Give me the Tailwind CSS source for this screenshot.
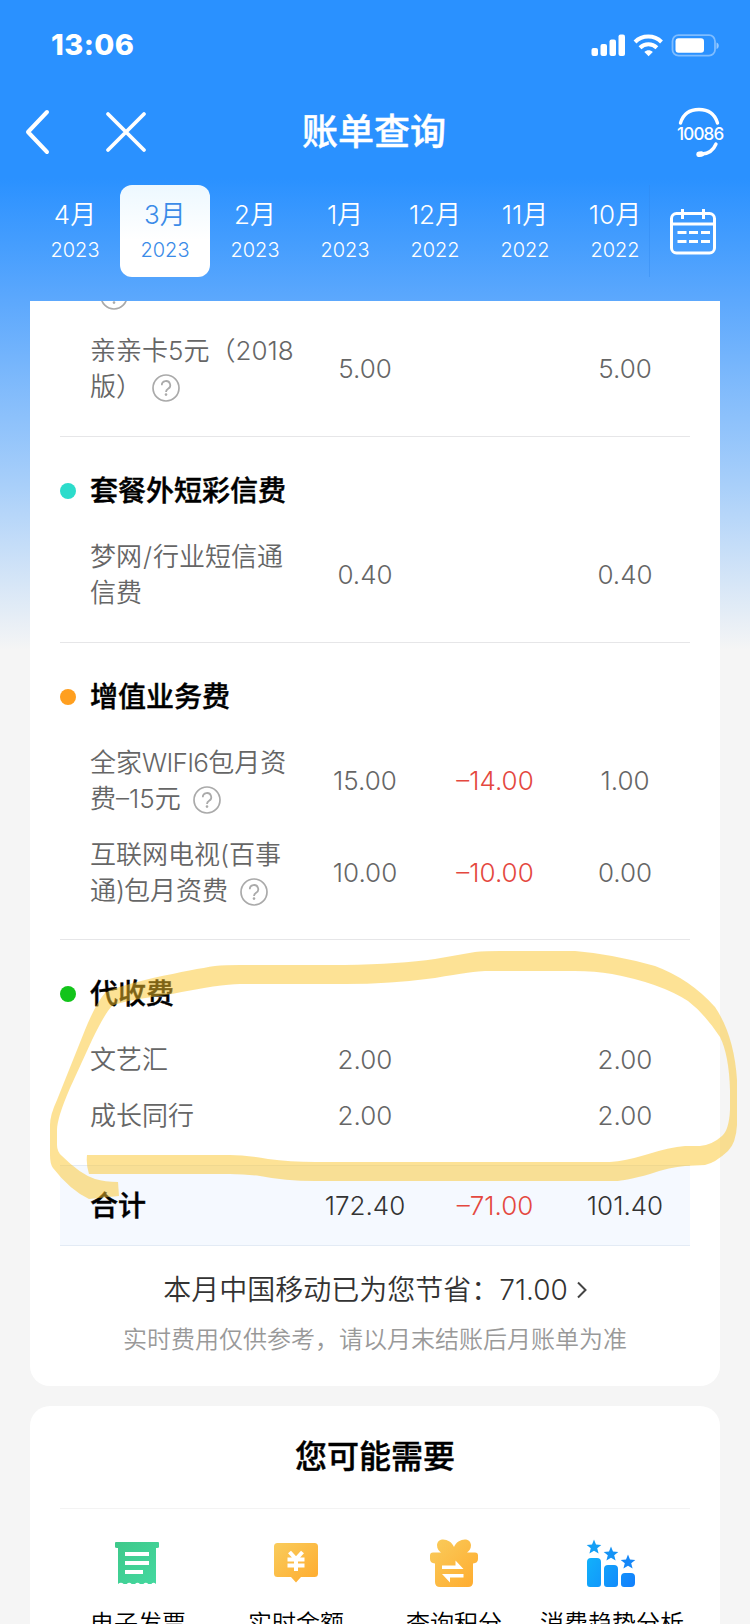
<!DOCTYPE html>
<html lang="zh-CN">
<head>
<meta charset="utf-8">
<title>账单查询</title>
<script src="https://cdn.jsdelivr.net/npm/@tailwindcss/browser@4"></script>
</head>
<body class="bg-[#f5f5f5]">
<svg class="hidden">
  <symbol id="help" viewBox="0 0 28 28"><circle cx="14" cy="14" r="13" fill="none" stroke="#aaa" stroke-width="1.7"/><path d="M9.800 11.200a4.200 4.100 0 1 1 6.300 3.500c-1.400.9-2.100 1.400-2.100 3.300" fill="none" stroke="#aaa" stroke-width="1.800"/><circle cx="14" cy="20.600" r="1.300" fill="#aaa"/></symbol>
</svg>
<div class="relative w-[750px] h-[1624px] overflow-hidden bg-[linear-gradient(180deg,#2a91ff_0px,#2a91ff_178px,#5ca8fd_300px,#a6cefa_480px,#f5f5f5_650px)] font-['Inter','Noto_Sans_CJK_SC',sans-serif] font-[350]">

  <!-- status bar -->
  <div class="h-[88px] flex items-center justify-between pl-[51px] pr-[31px] text-white">
    <div class="text-[29px] leading-10 font-extrabold tracking-[0.4px] pt-[2px]">13:06</div>
    <svg class="w-[128px] h-[24px] mt-[2px]" viewBox="0 0 128 24" fill="#fff">
      <rect x="0.500" y="15" width="6.500" height="8" rx="2"/><rect x="9.500" y="11" width="6.500" height="12" rx="2"/><rect x="18.500" y="6.500" width="6.500" height="16.500" rx="2"/><rect x="27.500" y="1.500" width="6.500" height="21.500" rx="2"/>
      <g fill="none" stroke="#fff" stroke-width="4"><path d="M44 9c7.200-7.200 19.300-7.200 26.500 0"/><path d="M49 14.800c4.800-4.700 12-4.700 16.900 0"/></g>
      <path d="M57.600 23.200l-4.200-4.300c2.300-2.200 6.100-2.200 8.400 0z"/>
      <rect x="81.500" y="2.200" width="42.500" height="20.500" rx="6" fill="none" stroke="#fff" stroke-opacity=".4" stroke-width="1.800"/>
      <rect x="84.500" y="5.200" width="28.500" height="14.500" rx="3"/><path d="M125.500 9.500c3 1 3 5.500 0 6.500z" fill-opacity=".5"/>
    </svg>
  </div>

  <!-- navigation -->
  <div class="h-[88px] flex items-center text-white pl-6">
    <svg class="w-[28px] h-[48px]" viewBox="0 0 28 48" fill="none" stroke="#fff" stroke-width="4" stroke-linecap="round" stroke-linejoin="round"><path d="M23 4L4 24l19 20"/></svg>
    <svg class="w-[44px] h-[44px] ml-[52px]" viewBox="0 0 44 44" fill="none" stroke="#fff" stroke-width="3.800" stroke-linecap="round"><path d="M4 4l36 36M40 4L4 40"/></svg>
    <h1 class="ml-[154px] text-[36px] leading-[52px] font-medium [-webkit-text-stroke:0.400px_white]">账单查询</h1>
    <div class="relative ml-[231px] w-[46px] h-[50px]">
      <svg class="absolute inset-0 w-[46px] h-[50px]" viewBox="0 0 46 50" fill="none" stroke="#fff" stroke-width="3.400" stroke-linecap="round"><path d="M3.500 16C6.500 6 13.500 2.500 22 2.500S37.500 6 40.500 16M39 37c-2.500 6-7 9.500-14 10"/><path d="M22 47.300l2.500-.200" stroke-width="5.500"/></svg>
      <div class="absolute top-[17px] left-0 text-[17px] leading-5 font-medium tracking-[-0.800px]">10086</div>
    </div>
  </div>

  <!-- month selector -->
  <div class="h-[125px] pt-[9px] pl-[30px] flex text-white text-center">
    <div class="w-[620px] h-[92px] flex border-r border-[#2f87ee]/40 overflow-hidden">
      <div class="w-[90px] shrink-0 pt-[12px]"><div class="text-[26px] leading-[35px]">4月</div><div class="text-[20px] leading-[36px]">2023</div></div>
      <div class="w-[90px] shrink-0 pt-[12px] rounded-xl bg-linear-to-b from-[#edf8ff] to-white to-60% text-[#3a8be8]"><div class="text-[26px] leading-[35px]">3月</div><div class="text-[20px] leading-[36px]">2023</div></div>
      <div class="w-[90px] shrink-0 pt-[12px]"><div class="text-[26px] leading-[35px]">2月</div><div class="text-[20px] leading-[36px]">2023</div></div>
      <div class="w-[90px] shrink-0 pt-[12px]"><div class="text-[26px] leading-[35px]">1月</div><div class="text-[20px] leading-[36px]">2023</div></div>
      <div class="w-[90px] shrink-0 pt-[12px]"><div class="text-[26px] leading-[35px]">12月</div><div class="text-[20px] leading-[36px]">2022</div></div>
      <div class="w-[90px] shrink-0 pt-[12px]"><div class="text-[26px] leading-[35px]">11月</div><div class="text-[20px] leading-[36px]">2022</div></div>
      <div class="w-[90px] shrink-0 pt-[12px]"><div class="text-[26px] leading-[35px]">10月</div><div class="text-[20px] leading-[36px]">2022</div></div>
    </div>
    <svg class="w-[48px] h-[48px] ml-[19px] mt-[23px]" viewBox="0 0 48 48" fill="none" stroke="#fff" stroke-width="3"><rect x="2.500" y="5.500" width="43" height="39.500" rx="5"/><path d="M2.500 16H45.500M13.500 1v10M34.500 1v10M8.500 24.500h9M20 24.500h9M32 24.500h9M8.500 33.500h9M20 33.500h9M32 33.500h9"/></svg>
  </div>

  <!-- bill card -->
  <div class="mx-[30px] h-[1085px] px-[30px] bg-white rounded-b-[20px] overflow-hidden text-[26px] leading-9 text-[#666]">
    <div class="h-[9px] flex items-end pl-10"><svg class="w-[28px] h-[28px]"><use href="#help"/></svg></div>
    <div class="h-[126px] pt-[13px]">
      <div class="h-[92px] grid grid-cols-[240px_130px_130px_130px] items-center text-center">
        <div class="pl-[30px] text-left whitespace-nowrap">亲亲卡5元（2018<br><span class="flex items-center">版）<svg class="w-[28px] h-[28px] ml-[10px] mt-[1px]"><use href="#help"/></svg></span></div><div>5.00</div><div></div><div>5.00</div>
      </div>
    </div>

    <section class="border-t border-[#e6e6e8] pt-[34px] pb-[21px]">
      <h2 class="h-10 mb-[18px] flex items-center text-[28px] font-medium text-black [-webkit-text-stroke:0.400px_black]"><i class="w-4 h-4 mr-[14px] rounded-full bg-[#2cdccb]"></i>套餐外短彩信费</h2>
      <div class="h-[92px] grid grid-cols-[240px_130px_130px_130px] items-center text-center">
        <div class="pl-[30px] text-left whitespace-nowrap">梦网<span class="mx-[1px]">/</span>行业短信通<br>信费</div><div>0.40</div><div></div><div>0.40</div>
      </div>
    </section>

    <section class="border-t border-[#e6e6e8] pt-[34px] pb-[20px]">
      <h2 class="h-10 mb-[18px] flex items-center text-[28px] font-medium text-black [-webkit-text-stroke:0.400px_black]"><i class="w-4 h-4 mr-[14px] rounded-full bg-[#ff9f1f]"></i>增值业务费</h2>
      <div class="h-[92px] grid grid-cols-[240px_130px_130px_130px] items-center text-center">
        <div class="pl-[30px] text-left whitespace-nowrap">全家<span class="tracking-[-0.700px]">WIFI6</span>包月资<br><span class="flex items-center">费–15元<svg class="w-[28px] h-[28px] ml-[12px] mt-[1px]"><use href="#help"/></svg></span></div><div>15.00</div><div class="text-[#e4483f]">–14.00</div><div>1.00</div>
      </div>
      <div class="h-[92px] grid grid-cols-[240px_130px_130px_130px] items-center text-center">
        <div class="pl-[30px] text-left whitespace-nowrap">互联网电视(百事<br><span class="flex items-center"><span>通<span class="tracking-[-1px]">)</span>包月资费</span><svg class="w-[28px] h-[28px] ml-[12px] mt-[1px]"><use href="#help"/></svg></span></div><div>10.00</div><div class="text-[#e4483f]">–10.00</div><div>0.00</div>
      </div>
    </section>

    <section class="border-t border-[#e6e6e8] pt-[34px] pb-[21px]">
      <h2 class="h-10 mb-[18px] flex items-center text-[28px] font-medium text-black [-webkit-text-stroke:0.400px_black]"><i class="w-4 h-4 mr-[14px] rounded-full bg-[#12c41a]"></i>代收费</h2>
      <div class="h-14 grid grid-cols-[240px_130px_130px_130px] items-center text-center">
        <div class="pl-[30px] text-left">文艺汇</div><div>2.00</div><div></div><div>2.00</div>
      </div>
      <div class="h-14 grid grid-cols-[240px_130px_130px_130px] items-center text-center">
        <div class="pl-[30px] text-left">成长同行</div><div>2.00</div><div></div><div>2.00</div>
      </div>
    </section>

    <div class="h-[81px] border-y border-[#e3ebf5] bg-[#f5f9ff] grid grid-cols-[240px_130px_130px_130px] items-center text-center text-[#333]">
      <div class="pl-[30px] text-left text-[28px] font-medium text-black [-webkit-text-stroke:0.400px_black]">合计</div><div>172.40</div><div class="text-[#e4483f]">–71.00</div><div>101.40</div>
    </div>

    <div class="mt-[24px] h-10 flex items-center justify-center text-[28px] text-[#333]">本月中国移动已为您节省：71.00<svg class="w-[11px] h-[18px] ml-[8px]" viewBox="0 0 11 18" fill="none" stroke="#444" stroke-width="2"><path d="M2 1.500l7.500 7.500L2 16.500"/></svg></div>
    <div class="mt-[12px] text-center text-[24px] leading-9 text-[#999]">实时费用仅供参考，请以月末结账后月账单为准</div>
  </div>

  <!-- recommended services -->
  <div class="mx-[30px] mt-5 h-[260px] px-[30px] bg-white rounded-t-[20px]">
    <h2 class="h-[103px] flex items-center justify-center border-b border-[#f3f3f3] text-[32px] font-medium text-black [-webkit-text-stroke:0.400px_black]">您可能需要</h2>
    <div class="pt-[27px] -mx-[1px] grid grid-cols-4 text-center text-[24px] leading-9 text-black whitespace-nowrap">
      <div class="flex flex-col items-center">
        <svg class="w-[56px] h-[56px] -ml-[2px]" viewBox="0 0 56 56"><defs><linearGradient id="g" x1="0" y1="0" x2="1" y2="1"><stop stop-color="#3ec88a"/><stop offset="1" stop-color="#44d9a0"/></linearGradient></defs><path d="M6 7q0-1 1-1h42q1 0 1 1v4q0 1-2 1H47v36q-2.500-2.500-4.700 0h-3q-2.500-2.500-5 0h-3.300q-2.500-2.500-5 0h-3.300q-2.500-2.500-5 0h-3Q12 45.500 9 48V12H8q-2 0-2-1z" fill="url(#g)"/><path d="M16 18h24M16 27h24M16 36h18" stroke="#fff" stroke-width="4"/></svg>
        <div class="mt-[14px]">电子发票</div>
      </div>
      <div class="flex flex-col items-center">
        <svg class="w-[56px] h-[56px]" viewBox="0 0 56 56"><defs><linearGradient id="o" x1="0" y1="0" x2="1" y2="1"><stop stop-color="#f9cc5c"/><stop offset="1" stop-color="#ffab2e"/></linearGradient></defs><path d="M9.500 7h37q3.500 0 3.500 3.500v27q0 3.500-3.500 3.500H33l-5 5.500-5-5.500H9.500Q6 41 6 37.500v-27Q6 7 9.500 7z" fill="url(#o)"/><path d="M21.500 16l6.500 7 6.500-7M19.500 23.500h17M19.500 29.500h17M28 22v13" fill="none" stroke="#fff" stroke-width="4"/></svg>
        <div class="mt-[14px]">实时金额</div>
      </div>
      <div class="flex flex-col items-center">
        <svg class="w-[56px] h-[56px]" viewBox="0 0 56 56"><path d="M28 11C25 3 12 0 11 9c0 4 2 6 4 7.500H7q-3 0-3 3V23q0 4 5 4.500V46q0 5 5 5h28q5 0 5-5V27.500q5-.500 5-4.500v-3.500q0-3-3-3h-8c2-1.500 4-3.500 4-7.500C44 0 31 3 28 11z" fill="url(#o)"/><path d="M16 33h21.500l-8-8.500v5H16zM37.500 38H16l8 8.500v-5h13.500z" fill="#fff"/></svg>
        <div class="mt-[14px]">查询积分</div>
      </div>
      <div class="flex flex-col items-center">
        <svg class="w-[56px] h-[56px] -ml-[2px]" viewBox="0 0 56 56"><defs><linearGradient id="b" gradientUnits="userSpaceOnUse" x1="4" y1="20" x2="52" y2="50"><stop stop-color="#12b2fa"/><stop offset="1" stop-color="#127ffc"/></linearGradient><path id="s" d="M0-7.500l2 5 5.300.400-4.100 3.400 1.400 5.300L0 3.800l-4.600 2.800 1.400-5.300-4.100-3.400 5.300-.400z"/></defs><g fill="url(#b)"><path d="M8 22h6q4 0 4 4v22q0 3-3 3H7q-3 0-3-3V26q0-4 4-4zM25 29h6q4 0 4 4v15q0 3-3 3h-8q-3 0-3-3V33q0-4 4-4zM42 37h6q4 0 4 4v6q0 4-4 4h-7q-3 0-3-3v-7q0-4 4-4z"/></g><use href="#s" x="11" y="11" fill="#159ff5"/><use href="#s" x="28" y="18" fill="#1593f5"/><use href="#s" x="45" y="26" fill="#1587f8"/></svg>
        <div class="mt-[14px]">消费趋势分析</div>
      </div>
    </div>
  </div>

  <!-- highlighter mark over the charges -->
  <svg class="absolute inset-0 pointer-events-none" width="750" height="1624" viewBox="0 0 750 1624" fill="#fbc52b" fill-opacity=".5">
    <path d="M89 1199Q70 1190 53 1168Q50 1164 50 1155V1125Q50 1115 57 1100L85 1030Q96 1003 105 993Q112 988 153 978Q195 969 215 966Q225 965 240 965H345Q400 964 435 959L475 952Q485 951 500 951H575Q612 954 655 966Q690 979 715 1007Q734 1035 737 1080V1125Q736 1143 728 1151Q715 1163 705 1165L685 1166Q670 1167 650 1174Q625 1181 615 1181H315Q285 1181 260 1176Q245 1174 230 1174H89Q86 1165 87 1155H230Q245 1155 268 1159Q290 1162 315 1162H610Q625 1161 645 1155Q670 1147 685 1146H700Q712 1145 722 1136Q729 1130 730 1110V1090Q729 1055 720 1037Q704 1013 688 1001Q660 983 612 974Q595 971 575 971H485Q475 971 435 978Q390 984 345 984H240Q220 984 172 994Q120 1001 112 1006Q105 1013 92 1040L70 1088Q57 1118 57 1130V1145Q57 1152 62 1156Q80 1174 95 1179Q105 1182 118 1182L119 1196Z"/>
  </svg>
</div>
</body>
</html>
